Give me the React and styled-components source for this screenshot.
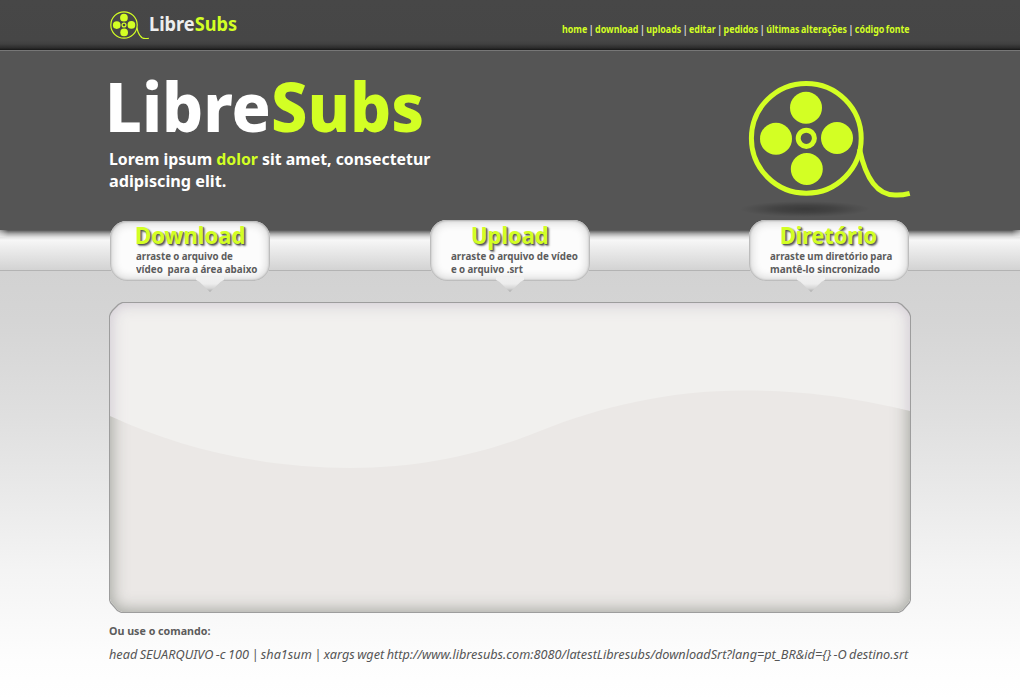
import React, { useLayoutEffect, useRef, useState } from 'react';
import styled, { createGlobalStyle, css } from 'styled-components';

const LIME = '#d3ff24';

const GlobalStyle = createGlobalStyle`
  * { box-sizing: border-box; }
  body {
    margin: 0;
    font-family: 'Noto Sans', 'Open Sans', sans-serif;
    background: #fff;
    overflow: hidden;
  }
`;

const Page = styled.div`
  width: 1020px;
  height: 700px;
  display: flex;
  flex-direction: column;
  overflow: hidden;
`;

const Container = styled.div`
  width: 802px;
  margin: 0 auto;
  display: flex;
  justify-content: space-between;
`;

const TopBar = styled.header`
  flex: none;
  height: 51px;
  background: linear-gradient(#474747 0, #464646 40px, #404040 44px, #2b2b2b 48px, #161616 50px, #777 50px);
`;

const Brand = styled.div`
  display: flex;
  padding: 11px 0 0 1px;
`;

const BrandName = styled.div`
  padding-top: 1px;
  margin-left: -0.7px;
`;

const Nav = styled.nav`
  padding: 19px 1px 0 0;
`;

const NavLink = styled.a`
  color: ${LIME};
  text-decoration: none;
`;

const Accent = styled.span`
  color: ${LIME};
`;

const FitBox = styled.div`
  width: ${(p) => p.$width}px;
  height: ${(p) => p.$line}px;
  line-height: ${(p) => p.$line}px;
  font-size: ${(p) => p.$size}px;
  font-weight: ${(p) => p.$weight || 700};
  font-style: ${(p) => (p.$italic ? 'italic' : 'normal')};
  word-spacing: ${(p) => p.$gap || 0}px;
  color: ${(p) => p.$color || '#fff'};
  ${(p) =>
    p.$shadow &&
    css`
      text-shadow: 1px 1px 1px #555, 2px 2px 2px rgba(60, 60, 60, 0.65);
    `}
`;

const FitText = styled.span`
  display: inline-block;
  white-space: pre;
  transform-origin: 0 50%;
`;

/* A single line condensed or widened to fill its column exactly. */
function Line({ width, children, ...rest }) {
  const ref = useRef(null);
  const [scale, setScale] = useState(1);
  useLayoutEffect(() => {
    setScale(width / ref.current.offsetWidth);
  }, [width]);
  return (
    <FitBox $width={width} {...rest}>
      <FitText ref={ref} style={{ transform: `scaleX(${scale})` }}>
        {children}
      </FitText>
    </FitBox>
  );
}

const Hero = styled.section`
  flex: none;
  height: 179px;
  background: #555;
`;

const Intro = styled.div`
  display: flex;
  flex-direction: column;
`;

const HeroTitle = styled.div`
  padding: 15px 0 0;
  margin-left: -4px;
`;

const Tagline = styled.div`
  padding-top: 1px;
`;

const ReelColumn = styled.div`
  padding: 29px 0 0;
`;

const ReelSvg = styled.svg`
  display: block;
  width: ${(p) => p.$width}px;
  height: ${(p) => p.$width * (118 / 163)}px;
`;

const ReelShadow = styled.div`
  width: 130px;
  height: 16px;
  margin: 3px 0 0 -8px;
  background: radial-gradient(closest-side, rgba(0, 0, 0, 0.32), rgba(0, 0, 0, 0.22) 45%, rgba(0, 0, 0, 0.07) 80%, transparent);
`;

function Reel({ width }) {
  return (
    <ReelSvg $width={width} viewBox="0 0 163 118" fill="none" stroke={LIME} strokeWidth="5">
      <circle cx="58.3" cy="58.3" r="54.9" />
      <circle cx="58.3" cy="58.3" r="8.1" />
      <g fill={LIME} stroke="none">
        <circle cx="58" cy="27.7" r="16" />
        <circle cx="28" cy="58.7" r="16" />
        <circle cx="89" cy="58" r="16" />
        <circle cx="58.8" cy="89" r="16" />
      </g>
      <path d="M111.5 69 C117 95 128 115 147 115 C152 115.3 157 114.5 161.7 113.3" />
    </ReelSvg>
  );
}

const Shelf = styled.section`
  flex: none;
  height: 41px;
  border-bottom: 1px solid #b3b3b3;
  background:
    linear-gradient(90deg, rgba(245, 245, 245, 0.5), transparent) 0 0 / 8px 7px no-repeat,
    linear-gradient(270deg, rgba(245, 245, 245, 0.5), transparent) 100% 0 / 8px 7px no-repeat,
    linear-gradient(#505050 0, #777 1.5px, #b0b0b0 4px, #e0e0e0 7px, #f7f7f7 10px, #eee 17px, #d3d3d3 40px);
`;

const CardRow = styled(Container)`
  width: 800px;
  position: relative;
  top: -10px;
`;

const CardBox = styled.div`
  position: relative;
  width: 160px;
  height: ${(p) => 61 - (p.$drop || 0)}px;
  margin: ${(p) => p.$drop || 0}px ${(p) => p.$nudge || 0}px 0 ${(p) => -(p.$nudge || 0)}px;
  padding: ${(p) => 2 - (p.$drop || 0)}px 0 0 ${(p) => p.$inset}px;
  border-radius: 17px;
  background: #fcfcfc;
  box-shadow: inset 0 0 2px 1px #b0b0b0, inset 0 0 9px 3px #d8d8d8;

  &::after {
    content: '';
    position: absolute;
    bottom: -11px;
    left: ${(p) => p.$tail - 14}px;
    width: 28px;
    height: 15px;
    clip-path: polygon(0 0, 100% 0, 100% 20%, 88% 31%, 50% 100%, 12% 31%, 0 20%);
    background:
      linear-gradient(to bottom left, transparent 49%, rgba(120, 120, 120, 0.28) 66%) 0 100% / 14px 12px no-repeat,
      linear-gradient(to bottom right, transparent 49%, rgba(120, 120, 120, 0.28) 66%) 100% 100% / 14px 12px no-repeat,
      linear-gradient(#f0f0f0, #ededed 45%, #d6d6d6 75%, #a8a8a8);
  }
`;

const CardTitle = styled.div`
  margin-left: ${(p) => p.$shift}px;
`;

const Stage = styled.main`
  flex: 1;
  padding-top: 31px;
  background: linear-gradient(#d2d2d2, #d5d5d5 50px, #dfdfdf 145px, #f4f4f4 300px, #fdfdfd 390px, #fff);
`;

const bevel = `polygon(
  0 14px, 1px 11px, 3px 8px, 9px 2px, 13px 0,
  calc(100% - 13px) 0, calc(100% - 9px) 2px, calc(100% - 3px) 8px, calc(100% - 1px) 11px, 100% 14px,
  100% calc(100% - 13px), calc(100% - 1px) calc(100% - 10px), calc(100% - 8px) calc(100% - 2px), calc(100% - 12px) 100%,
  12px 100%, 8px calc(100% - 2px), 1px calc(100% - 10px), 0 calc(100% - 13px)
)`;

const DropFrame = styled.div`
  width: 802px;
  height: 311px;
  margin: 0 auto;
  padding: 1px;
  background: #9d9d9d;
  clip-path: ${bevel};
`;

const DropArea = styled.div`
  position: relative;
  height: 309px;
  background: #f1f0ee;
  clip-path: ${bevel};
`;

const wave = 'M0 113 C75 148 160 165 240 165 C318 165 380 148 430 128 C492 103 560 87.5 635 87.5 C700 87.5 750 96 800 108';

const Wave = styled.svg`
  display: block;
  width: 800px;
  height: 309px;
`;

const Shade = styled.div`
  position: absolute;
  inset: 0;
  border-radius: 13px;
`;

const UpperShade = styled(Shade)`
  clip-path: path('${wave} V0 H0 Z');
  box-shadow: inset 0 0 15px 1px rgba(190, 180, 195, 0.7);
`;

const LowerShade = styled(Shade)`
  clip-path: path('${wave} V309 H0 Z');
  box-shadow: inset 0 0 16px 2px rgba(135, 138, 130, 0.72);
`;

const Footer = styled.footer`
  width: 802px;
  margin: 0 auto;
  padding-top: 8px;
`;

const CommandRow = styled.div`
  padding-top: 2px;
`;

const links = ['home', 'download', 'uploads', 'editar', 'pedidos', 'últimas alterações', 'código fonte'];

const cards = [
  { title: 'Download', titleWidth: 110, shift: -1, inset: 26, tail: 100, drop: 1,
    lines: [['arraste o arquivo de', 97], ['vídeo  para a área abaixo', 121]] },
  { title: 'Upload', titleWidth: 78, shift: 20, inset: 21, tail: 80,
    lines: [['arraste o arquivo de vídeo', 127], ['e o arquivo .srt', 72]] },
  { title: 'Diretório', titleWidth: 97, shift: 10, inset: 21, tail: 62, nudge: 1,
    lines: [['arraste um diretório para', 122], ['mantê-lo sincronizado', 110]] },
];

function Card({ title, titleWidth, shift, inset, tail, drop, nudge, lines }) {
  return (
    <CardBox $inset={inset} $tail={tail} $drop={drop} $nudge={nudge}>
      <CardTitle $shift={shift}>
        <Line width={titleWidth} $line={28} $size={22.5} $color={LIME} $shadow>{title}</Line>
      </CardTitle>
      {lines.map(([text, width]) => (
        <Line key={text} width={width} $line={13} $size={10.5} $gap={-0.2} $color="#5c5c5c">{text}</Line>
      ))}
    </CardBox>
  );
}

export default function App() {
  return (
    <Page>
      <GlobalStyle />
      <TopBar>
        <Container>
          <Brand>
            <Reel width={39.2} />
            <BrandName>
              <Line width={88} $line={25} $size={19} $color="#eee">
                Libre<Accent>Subs</Accent>
              </Line>
            </BrandName>
          </Brand>
          <Nav>
            <Line width={348} $line={21} $size={9.8} $gap={-0.9} $color="#ddd">
              {links.map((label, i) => (
                <React.Fragment key={label}>
                  {i > 0 && ' | '}
                  <NavLink>{label}</NavLink>
                </React.Fragment>
              ))}
            </Line>
          </Nav>
        </Container>
      </TopBar>
      <Hero>
        <Container>
          <Intro>
            <HeroTitle>
              <Line width={319} $line={81} $size={67} $weight={800}>
                Libre<Accent>Subs</Accent>
              </Line>
            </HeroTitle>
            <Tagline>
              <Line width={321} $line={21.5} $size={16.5}>
                Lorem ipsum <Accent>dolor</Accent> sit amet, consectetur
              </Line>
              <Line width={117} $line={21.5} $size={16.5}>adipiscing elit.</Line>
            </Tagline>
          </Intro>
          <ReelColumn>
            <Reel width={163} />
            <ReelShadow />
          </ReelColumn>
        </Container>
      </Hero>
      <Shelf>
        <CardRow>
          {cards.map((card) => <Card key={card.title} {...card} />)}
        </CardRow>
      </Shelf>
      <Stage>
        <DropFrame>
          <DropArea>
            <Wave viewBox="0 0 800 309">
              <path d={`${wave} V309 H0 Z`} fill="#ebe8e6" />
            </Wave>
            <UpperShade />
            <LowerShade />
          </DropArea>
        </DropFrame>
        <Footer>
          <Line width={101} $line={20} $size={11} $color="#5c5c5c">Ou use o comando:</Line>
          <CommandRow>
            <Line width={799} $line={22} $size={13} $weight={400} $gap={-0.9} $italic $color="#555">
              {'head SEUARQUIVO -c 100 | sha1sum | xargs wget http://www.libresubs.com:8080/latestLibresubs/downloadSrt?lang=pt_BR&id={} -O destino.srt'}
            </Line>
          </CommandRow>
        </Footer>
      </Stage>
    </Page>
  );
}
